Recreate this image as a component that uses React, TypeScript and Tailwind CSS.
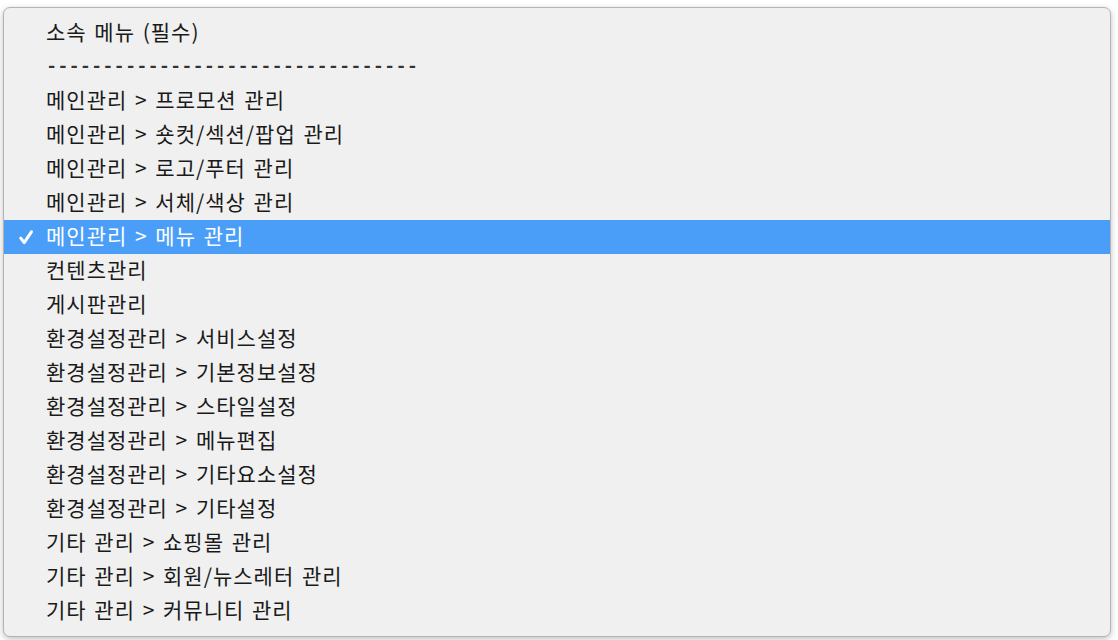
import React from "react";

const items: string[] = [
  "소속 메뉴 (필수)",
  "---------------------------------",
  "메인관리 > 프로모션 관리",
  "메인관리 > 숏컷/섹션/팝업 관리",
  "메인관리 > 로고/푸터 관리",
  "메인관리 > 서체/색상 관리",
  "메인관리 > 메뉴 관리",
  "컨텐츠관리",
  "게시판관리",
  "환경설정관리 > 서비스설정",
  "환경설정관리 > 기본정보설정",
  "환경설정관리 > 스타일설정",
  "환경설정관리 > 메뉴편집",
  "환경설정관리 > 기타요소설정",
  "환경설정관리 > 기타설정",
  "기타 관리 > 쇼핑몰 관리",
  "기타 관리 > 회원/뉴스레터 관리",
  "기타 관리 > 커뮤니티 관리",
];

export default function App() {
  return (
    <div
      className="w-[1118px] h-[640px] bg-white overflow-hidden pt-[7px] pl-[3px]"
      style={{ fontFamily: '"Noto Sans CJK KR", "Noto Sans", sans-serif' }}
    >
      <div className="w-[1108px] h-[630px] bg-[#f0f0f0] border border-[#b4b4b4] rounded-[7px] shadow-[0_2px_6px_rgba(0,0,0,0.25)] pt-[8px]">
        {items.map((t, i) => {
          const sel = i === 6;
          const dash = i === 1;
          return (
            <div
              key={i}
              className={`h-[34px] flex items-center leading-none ${
                sel ? "bg-[#4b9ef8] text-white" : "text-[#1a1a1a]"
              }`}
            >
              <div className="w-[42px] flex items-center justify-center pl-[1px]">
                {sel && (
                  <svg width="14" height="15" viewBox="0 0 14 15">
                    <path
                      d="M1.8 8.2 L5.2 12.6 L12.4 1.8"
                      fill="none"
                      stroke="white"
                      strokeWidth="3"
                      strokeLinecap="round"
                      strokeLinejoin="round"
                    />
                  </svg>
                )}
              </div>
              {dash ? (
                <span
                  className="text-[18.8px] font-bold text-[#333333]"
                  style={{ fontFamily: '"Liberation Mono", monospace' }}
                >
                  {t}
                </span>
              ) : (
                <span className="text-[21px] tracking-[1px] [word-spacing:2px] pb-[3px]">
                  {t}
                </span>
              )}
            </div>
          );
        })}
      </div>
    </div>
  );
}
